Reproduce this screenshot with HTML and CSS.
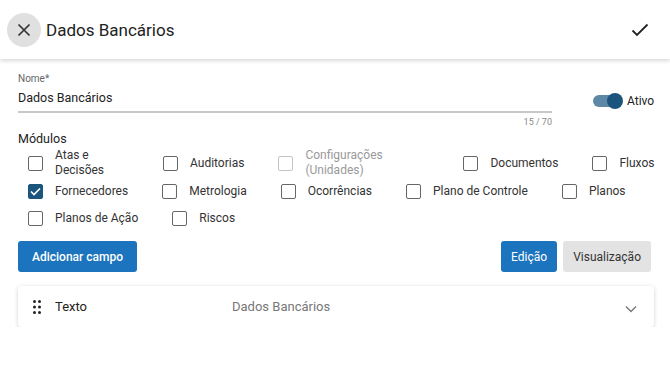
FILE: index.html
```html
<!DOCTYPE html>
<html lang="pt-BR">
<head>
    <meta charset="UTF-8">
    <meta name="viewport" content="width=device-width, initial-scale=1.0">
    <title>Dados Bancários</title>
    <link rel="stylesheet" href="styles.css">
</head>
<body>
    <div class="header">
        <button class="close-btn" aria-label="Fechar">
            <svg width="14" height="14" viewBox="0 0 14 14"><path d="M1.5 1.5 L12.5 12.5 M12.5 1.5 L1.5 12.5" stroke="#333" stroke-width="1.7" fill="none"/></svg>
        </button>
        <h1 class="title">Dados Bancários</h1>
        <button class="save-btn" aria-label="Salvar">
            <svg width="18" height="14" viewBox="0 0 18 14"><path d="M1.5 7.5 L6 12 L16.5 1.5" stroke="#222" stroke-width="1.8" fill="none"/></svg>
        </button>
    </div>

    <div class="content">
        <div class="name-row">
            <div class="field">
                <label class="field-label">Nome*</label>
                <div class="field-value">Dados Bancários</div>
                <div class="field-hint">15 / 70</div>
            </div>
            <div class="toggle-wrap">
                <span class="toggle"><span class="toggle-thumb"></span></span>
                <span class="toggle-label">Ativo</span>
            </div>
        </div>

        <div class="section-title">Módulos</div>
        <div class="modules">
            <div class="module-row tall">
                <label class="module"><span class="box"></span><span class="module-text wrap-a">Atas e Decisões</span></label>
                <label class="module"><span class="box"></span><span class="module-text">Auditorias</span></label>
                <label class="module disabled"><span class="box"></span><span class="module-text wrap-b">Configurações (Unidades)</span></label>
                <label class="module"><span class="box"></span><span class="module-text">Documentos</span></label>
                <label class="module"><span class="box"></span><span class="module-text">Fluxos</span></label>
            </div>
            <div class="module-row">
                <label class="module"><span class="box checked">
                    <svg width="11" height="9" viewBox="0 0 11 9"><path d="M1 4.5 L4 7.5 L10 1.5" stroke="#fff" stroke-width="1.6" fill="none"/></svg>
                </span><span class="module-text">Fornecedores</span></label>
                <label class="module"><span class="box"></span><span class="module-text">Metrologia</span></label>
                <label class="module"><span class="box"></span><span class="module-text">Ocorrências</span></label>
                <label class="module"><span class="box"></span><span class="module-text">Plano de Controle</span></label>
                <label class="module"><span class="box"></span><span class="module-text">Planos</span></label>
            </div>
            <div class="module-row">
                <label class="module"><span class="box"></span><span class="module-text">Planos de Ação</span></label>
                <label class="module"><span class="box"></span><span class="module-text">Riscos</span></label>
            </div>
        </div>

        <div class="actions">
            <button class="btn btn-primary">Adicionar campo</button>
            <div class="view-switch">
                <button class="btn btn-blue">Edição</button>
                <button class="btn btn-grey">Visualização</button>
            </div>
        </div>

        <div class="field-card">
            <svg class="drag" width="8" height="14" viewBox="0 0 8 14">
                <circle cx="1.5" cy="1.5" r="1.5"/><circle cx="6.5" cy="1.5" r="1.5"/>
                <circle cx="1.5" cy="7" r="1.5"/><circle cx="6.5" cy="7" r="1.5"/>
                <circle cx="1.5" cy="12.5" r="1.5"/><circle cx="6.5" cy="12.5" r="1.5"/>
            </svg>
            <span class="card-type">Texto</span>
            <span class="card-name">Dados Bancários</span>
            <svg class="chevron" width="12" height="8" viewBox="0 0 12 8"><path d="M1 1.5 L6 6.5 L11 1.5" stroke="#777" stroke-width="1.4" fill="none"/></svg>
        </div>
    </div>
</body>
</html>
```

FILE: styles.css
```css
body {
    margin: 0;
    padding: 0;
    font-family: 'Roboto', 'Liberation Sans', sans-serif;
    color: #222;
    background: #fff;
}

button {
    font-family: inherit;
    border: none;
    cursor: pointer;
}

.header {
    display: flex;
    align-items: center;
    height: 59px;
    padding: 0 7px;
    box-shadow: 0 2px 4px rgba(0, 0, 0, 0.15);
}

.close-btn {
    width: 34px;
    height: 34px;
    border-radius: 50%;
    background: #e0e0e0;
    display: flex;
    align-items: center;
    justify-content: center;
    padding: 0;
}

.title {
    margin: 0 0 0 5px;
    font-size: 17px;
    font-weight: 400;
    color: #222;
    flex: 1;
}

.save-btn {
    background: none;
    padding: 0;
    margin-right: 14px;
    display: flex;
}

.content {
    padding: 13px 18px 0;
}

.name-row {
    display: flex;
    align-items: center;
}

.field {
    width: 534px;
    flex-shrink: 0;
}

.field-label {
    display: block;
    font-size: 10px;
    color: #666;
    line-height: 13px;
}

.field-value {
    font-size: 12.5px;
    line-height: 16px;
    padding: 5px 0 5px;
    border-bottom: 2px solid #c8c8c8;
}

.field-hint {
    font-size: 9px;
    color: #888;
    text-align: right;
    margin-top: 3px;
    line-height: 12px;
}

.toggle-wrap {
    display: flex;
    align-items: center;
    flex-shrink: 0;
    margin-left: 41px;
    margin-top: 2px;
}

.toggle {
    position: relative;
    width: 27px;
    height: 12px;
    border-radius: 6px;
    background: #5d88a6;
}

.toggle-thumb {
    position: absolute;
    right: -3px;
    top: -2px;
    width: 16px;
    height: 16px;
    border-radius: 50%;
    background: #1b557d;
}

.toggle-label {
    font-size: 12px;
    margin-left: 7px;
}

.section-title {
    font-size: 12.5px;
    margin-top: 3px;
    line-height: 16px;
}

.modules {
    margin-top: 1px;
}

.module-row {
    display: flex;
    align-items: center;
    height: 27px;
}

.module-row.tall {
    height: 30px;
}

.module {
    display: flex;
    align-items: center;
    flex-shrink: 0;
    padding-left: 10px;
    margin-right: 24px;
    font-size: 12px;
}

.box {
    width: 13px;
    height: 13px;
    border: 1.5px solid #666;
    border-radius: 2px;
    margin-right: 12px;
    display: flex;
    align-items: center;
    justify-content: center;
    flex-shrink: 0;
}

.box.checked {
    background: #1b557d;
    border-color: #1b557d;
}

.module-text {
    line-height: 15px;
    color: #333;
}

.wrap-a {
    width: 74px;
}

.wrap-b {
    width: 124px;
}

.disabled .box {
    border-color: #c4c4c4;
}

.disabled .module-text {
    color: #9a9a9a;
}

.actions {
    display: flex;
    justify-content: space-between;
    margin-top: 9px;
}

.view-switch {
    display: flex;
    gap: 6px;
    margin-right: 1px;
}

.btn {
    height: 31px;
    border-radius: 3px;
    font-size: 12px;
    padding: 0 14px;
}

.btn-primary {
    background: #1b74bd;
    color: #fff;
    font-weight: 500;
}

.btn-blue {
    background: #1b74bd;
    color: #fff;
    padding: 0 10px;
}

.btn-grey {
    background: #e3e3e3;
    color: #333;
    padding: 0 10px;
}

.field-card {
    display: flex;
    align-items: center;
    height: 41px;
    margin-top: 14px;
    margin-right: -2px;
    padding: 0 17px 0 15px;
    border-radius: 4px;
    box-shadow: 0 1px 4px rgba(0, 0, 0, 0.18);
    font-size: 13px;
}

.drag {
    fill: #222;
}

.card-type {
    margin-left: 14px;
    width: 177px;
}

.card-name {
    color: #777;
    flex: 1;
}

.chevron {
    margin-top: 4px;
}
```
